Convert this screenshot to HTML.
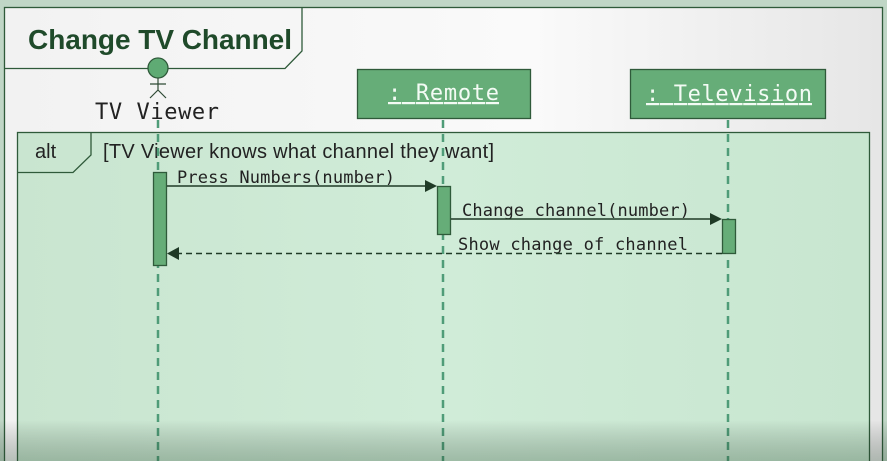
<!DOCTYPE html>
<html><head><style>
body{margin:0;width:887px;height:461px;overflow:hidden;background:#c3d8c8;}
svg{display:block}
</style></head><body>
<svg width="887" height="461" xmlns="http://www.w3.org/2000/svg">
<defs>
<linearGradient id="bg" x1="0" y1="0" x2="1" y2="0">
<stop offset="0" stop-color="#f2f2f2"/><stop offset="0.6" stop-color="#fafafa"/><stop offset="1" stop-color="#e6e6e6"/>
</linearGradient>
<linearGradient id="vig" x1="0" y1="0" x2="0" y2="1">
<stop offset="0" stop-color="#000" stop-opacity="0"/><stop offset="1" stop-color="#2a4a32" stop-opacity="0.3"/>
</linearGradient>
<linearGradient id="alt" x1="0" y1="0" x2="1" y2="0">
<stop offset="0" stop-color="#c9e5d0"/><stop offset="0.5" stop-color="#d0ecd8"/><stop offset="1" stop-color="#c8e6d0"/>
</linearGradient>
</defs>
<rect x="0" y="0" width="887" height="461" fill="#c0d6c6"/>
<rect x="4.5" y="7.5" width="878" height="460" fill="url(#bg)" stroke="#2f5a3a" stroke-width="1.3"/>
<path d="M4.5 68.5 H285 L302 51 V7.5" fill="none" stroke="#2f5a3a" stroke-width="1.3"/>
<text x="28" y="49" font-family="Liberation Sans,sans-serif" font-weight="bold" font-size="28" fill="#1f4a2a" textLength="264">Change TV Channel</text>
<circle cx="158" cy="68" r="10" fill="#5fab74" stroke="#2f5a3a" stroke-width="1.3"/>
<path d="M158 78 V90 M150 84 H166 M158 90 L150 98 M158 90 L166 98" stroke="#2f4a35" stroke-width="1.2" fill="none"/>
<text x="95" y="119" font-family="DejaVu Sans Mono,monospace" font-size="22" fill="#222" textLength="124">TV Viewer</text>
<rect x="357.5" y="69.5" width="173" height="49" fill="#66ad78" stroke="#2f5a3a" stroke-width="1.3"/>
<text x="388" y="100" font-family="DejaVu Sans Mono,monospace" font-size="22" fill="#f3fbf4" text-decoration="underline" textLength="111">: Remote</text>
<rect x="630.5" y="69.5" width="195" height="49" fill="#66ad78" stroke="#2f5a3a" stroke-width="1.3"/>
<text x="646" y="101" font-family="DejaVu Sans Mono,monospace" font-size="22" fill="#f3fbf4" text-decoration="underline" textLength="166">: Television</text>
<rect x="17.5" y="132.5" width="852" height="340" fill="url(#alt)" stroke="#2f5a3a" stroke-width="1.3"/>
<path d="M17.5 172.5 H73 L91 155 V132.5" fill="none" stroke="#2f5a3a" stroke-width="1.3"/>
<text x="35" y="158" font-family="Liberation Sans,sans-serif" font-size="20" fill="#222">alt</text>
<text x="103" y="158" font-family="Liberation Sans,sans-serif" font-size="20" fill="#222" textLength="391">[TV Viewer knows what channel they want]</text>
<g stroke="#4f9c78" stroke-width="2.5" stroke-dasharray="8,6">
<line x1="158" y1="120" x2="158" y2="461"/>
<line x1="443" y1="120" x2="443" y2="461"/>
<line x1="728" y1="120" x2="728" y2="461"/>
</g>
<rect x="153.5" y="172.5" width="13" height="93" fill="#66ad78" stroke="#2f5a3a" stroke-width="1.3"/>
<rect x="437.5" y="186.5" width="13" height="48" fill="#66ad78" stroke="#2f5a3a" stroke-width="1.3"/>
<rect x="722.5" y="219.5" width="13" height="34" fill="#66ad78" stroke="#2f5a3a" stroke-width="1.3"/>
<g font-family="DejaVu Sans Mono,monospace" font-size="17" fill="#222">
<text x="177" y="183" textLength="218">Press Numbers(number)</text>
<text x="462" y="216" textLength="228">Change channel(number)</text>
<text x="458" y="250" textLength="230">Show change of channel</text>
</g>
<line x1="167" y1="186" x2="426" y2="186" stroke="#1f3a26" stroke-width="1.5"/>
<path d="M425 180 L437 186 L425 192 Z" fill="#1f3a26"/>
<line x1="451" y1="219" x2="711" y2="219" stroke="#1f3a26" stroke-width="1.5"/>
<path d="M710 213 L722 219 L710 225 Z" fill="#1f3a26"/>
<line x1="722" y1="253.5" x2="178" y2="253.5" stroke="#1f3a26" stroke-width="1.5" stroke-dasharray="6,4"/>
<path d="M179 247 L167 253.5 L179 260 Z" fill="#1f3a26"/>
<rect x="0" y="420" width="887" height="41" fill="url(#vig)"/>
</svg>
</body></html>
